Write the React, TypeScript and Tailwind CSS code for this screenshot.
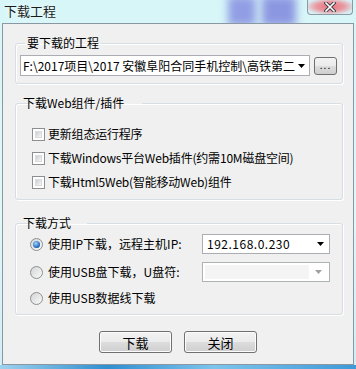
import React from "react";

const font = "font-['SimSun','Noto_Sans_CJK_SC',sans-serif]";

function Arrow({ disabled }: { disabled?: boolean }) {
  return (
    <svg width="7" height="4" viewBox="0 0 7 4" className="shrink-0">
      <path d="M0 0h7L3.5 4z" fill={disabled ? "#a0a0a0" : "#000"} />
    </svg>
  );
}

function Checkbox() {
  return (
    <span className="w-[13px] h-[13px] border border-[#8e8f8f] bg-white p-[2px] shrink-0">
      <span className="block w-full h-full bg-gradient-to-br from-[#cbcfd5] to-[#f6f6f6] border border-[#dcdcdc]" />
    </span>
  );
}

function Radio({ checked }: { checked?: boolean }) {
  return (
    <span className="w-[13px] h-[13px] rounded-full border border-[#8e8f8f] bg-gradient-to-br from-[#d2d4d6] to-[#fafafa] flex items-center justify-center shrink-0">
      {checked && (
        <span className="w-[7px] h-[7px] rounded-full bg-[radial-gradient(circle_at_40%_35%,#9fd6ff,#1c5fb5_70%,#0e3d84)]" />
      )}
    </span>
  );
}

function Button({ label }: { label: string }) {
  return (
    <button className="w-[73px] h-[22px] rounded-[3px] border border-[#707070] bg-[linear-gradient(#f2f2f2_0%,#ebebeb_50%,#dddddd_50%,#cfcfcf_100%)] shadow-[inset_0_0_0_1px_#fcfcfc] text-[13px] text-black leading-none">
      {label}
    </button>
  );
}

export default function App() {
  return (
    <div className={`w-[356px] h-[369px] relative overflow-hidden bg-[linear-gradient(180deg,#d7f6f8,#dff8f8_60%,#cfeef6)] ${font}`}>
      {/* blurred glass behind the title bar */}
      <div className="absolute left-[228px] top-[-4px] w-[28px] h-[30px] bg-[#8088e0] blur-[4px] opacity-80" />
      <div className="absolute left-[262px] top-[-4px] w-[34px] h-[30px] bg-[#7a80dc] blur-[4px] opacity-80" />
      <div className="absolute left-0 bottom-0 w-full h-[4px] bg-[linear-gradient(90deg,#9ed2ee,#2f8fd0_30%,#7cc4ec_60%,#3d9ad8)]" />

      <div className="h-[23px] relative">
        <span className="absolute left-[4px] top-[3px] text-[13px] leading-[15px] text-[#1b1b1b] [text-shadow:0_0_6px_#ffffff]">
          下载工程
        </span>
        <div className="absolute left-[307px] top-[-1px] w-[46px] h-[16px] rounded-b-[4px] border border-[#8c9aa6] border-t-0 bg-[radial-gradient(ellipse_at_center,#e8707b_0%,#e99aa2_45%,#d9eef2_80%)] flex items-center justify-center">
          <svg width="12" height="10" viewBox="0 0 12 10">
            <path d="M2 1l8 8M10 1l-8 8" stroke="#3a3f46" strokeWidth="3.4" strokeLinecap="square" />
            <path d="M2 1l8 8M10 1l-8 8" stroke="#ffffff" strokeWidth="1.6" strokeLinecap="square" />
          </svg>
        </div>
      </div>

      <div className="ml-[2px] w-[352px] h-[342px] border border-[#8b98a3] bg-[#f0f0f0] relative flex flex-col pl-[12px] pr-[10px] text-[12px] text-black">
        <fieldset className="mt-[12px] border border-[#d5dfe5] rounded-[3px] px-[4px] pb-[7px] shadow-[inset_1px_1px_0_#ffffff,1px_1px_0_#ffffff]">
          <legend className="ml-[5px] px-[2px] leading-[14px]">要下载的工程</legend>
          <div className="pt-[5px] flex items-center gap-[4px]">
            <div className="w-[290px] h-[21px] border border-[#abadb3] bg-white flex items-center pl-[2px] pr-[4px] gap-[3px]">
              <span className="flex-1 overflow-hidden whitespace-nowrap leading-[14px]">
                F:\2017项目\2017 安徽阜阳合同手机控制\高铁第二
              </span>
              <Arrow />
            </div>
            <button className="w-[23px] h-[18px] rounded-[3px] border border-[#707070] bg-[linear-gradient(#f2f2f2_0%,#ebebeb_50%,#dddddd_50%,#cfcfcf_100%)] text-[10px] leading-none tracking-[1px] pb-[2px]">
              ...
            </button>
          </div>
        </fieldset>

        <fieldset className="mt-[12px] border border-[#d5dfe5] rounded-[3px] pl-[16px] pb-[5px] shadow-[inset_1px_1px_0_#ffffff,1px_1px_0_#ffffff]">
          <legend className="ml-[5px] -translate-x-[16px] px-[2px] leading-[14px]">下载Web组件/插件</legend>
          <div className="pt-[12px] flex flex-col">
            {["更新组态运行程序", "下载Windows平台Web插件(约需10M磁盘空间)", "下载Html5Web(智能移动Web)组件"].map((t) => (
              <div key={t} className="h-[24px] flex items-center gap-[3px]">
                <Checkbox />
                <span className="leading-[14px] whitespace-nowrap tracking-[-0.2px]">{t}</span>
              </div>
            ))}
          </div>
        </fieldset>

        <fieldset className="mt-[16px] border border-[#d5dfe5] rounded-[3px] pl-[14px] pr-[12px] pb-[4px] shadow-[inset_1px_1px_0_#ffffff,1px_1px_0_#ffffff]">
          <legend className="ml-[5px] -translate-x-[14px] px-[2px] leading-[14px]">下载方式</legend>
          <div className="flex flex-col">
            <div className="h-[28px] flex items-center">
              <Radio checked />
              <span className="ml-[5px] flex-1 whitespace-nowrap">使用IP下载，远程主机IP:</span>
              <div className="w-[128px] h-[20px] border border-[#abadb3] bg-white flex items-center pl-[4px] pr-[5px]">
                <span className="flex-1 leading-[14px] tracking-[0.5px]">192.168.0.230</span>
                <Arrow />
              </div>
            </div>
            <div className="h-[28px] flex items-center">
              <Radio />
              <span className="ml-[5px] flex-1 whitespace-nowrap">使用USB盘下载，U盘符:</span>
              <div className="w-[128px] h-[20px] border border-[#adb2b5] bg-white p-[2px] flex items-center">
                <div className="flex-1 h-full bg-[#f4f4f4]" />
                <span className="w-[18px] flex justify-center">
                  <Arrow disabled />
                </span>
              </div>
            </div>
            <div className="h-[24px] flex items-center">
              <Radio />
              <span className="ml-[5px] whitespace-nowrap">使用USB数据线下载</span>
            </div>
          </div>
        </fieldset>

        <div className="mt-[16px] flex justify-center gap-[12px] pr-[2px]">
          <Button label="下载" />
          <Button label="关闭" />
        </div>
      </div>
    </div>
  );
}
